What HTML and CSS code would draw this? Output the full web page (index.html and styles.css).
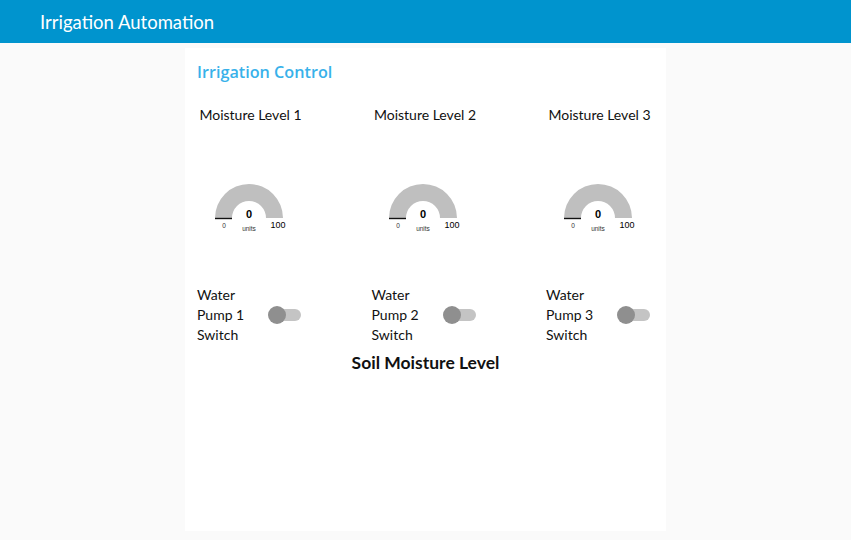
FILE: index.html
```html
<!DOCTYPE html>
<html>
<head>
<meta charset="utf-8">
<link rel="stylesheet" href="styles.css">
</head>
<body>
<header class="topbar">Irrigation Automation</header>
<main class="page">
  <section class="card">
    <h2 class="card-title">Irrigation Control</h2>
    <div class="grid">
      <div class="gauge">
        <div class="gauge-label">Moisture Level 1</div>
        <svg class="gauge-svg" viewBox="0 0 80 54" width="80" height="54">
          <path d="M6 37 A34 34 0 0 1 74 37 L57 37 A17 17 0 0 0 23 37 Z" fill="#bfbfbf"/>
          <line x1="6" y1="37.5" x2="23" y2="37.5" stroke="#111" stroke-width="1.4"/>
          <text x="40" y="37" class="g-val">0</text>
          <text x="15" y="47" class="g-min">0</text>
          <text x="40" y="49.5" class="g-unit">units</text>
          <text x="69" y="46.5" class="g-max">100</text>
        </svg>
      </div>
      <div class="gauge">
        <div class="gauge-label">Moisture Level 2</div>
        <svg class="gauge-svg" viewBox="0 0 80 54" width="80" height="54">
          <path d="M6 37 A34 34 0 0 1 74 37 L57 37 A17 17 0 0 0 23 37 Z" fill="#bfbfbf"/>
          <line x1="6" y1="37.5" x2="23" y2="37.5" stroke="#111" stroke-width="1.4"/>
          <text x="40" y="37" class="g-val">0</text>
          <text x="15" y="47" class="g-min">0</text>
          <text x="40" y="49.5" class="g-unit">units</text>
          <text x="69" y="46.5" class="g-max">100</text>
        </svg>
      </div>
      <div class="gauge">
        <div class="gauge-label">Moisture Level 3</div>
        <svg class="gauge-svg" viewBox="0 0 80 54" width="80" height="54">
          <path d="M6 37 A34 34 0 0 1 74 37 L57 37 A17 17 0 0 0 23 37 Z" fill="#bfbfbf"/>
          <line x1="6" y1="37.5" x2="23" y2="37.5" stroke="#111" stroke-width="1.4"/>
          <text x="40" y="37" class="g-val">0</text>
          <text x="15" y="47" class="g-min">0</text>
          <text x="40" y="49.5" class="g-unit">units</text>
          <text x="69" y="46.5" class="g-max">100</text>
        </svg>
      </div>

      <div class="switch-row">
        <div class="switch-text">Water Pump 1 Switch</div>
        <div class="toggle"><span class="track"></span><span class="thumb"></span></div>
      </div>
      <div class="switch-row">
        <div class="switch-text">Water Pump 2 Switch</div>
        <div class="toggle"><span class="track"></span><span class="thumb"></span></div>
      </div>
      <div class="switch-row">
        <div class="switch-text">Water Pump 3 Switch</div>
        <div class="toggle"><span class="track"></span><span class="thumb"></span></div>
      </div>
    </div>
    <div class="section-title">Soil Moisture Level</div>
  </section>
</main>
</body>
</html>
```

FILE: styles.css
```css
html, body {
  margin: 0;
  padding: 0;
}
body {
  background: #fafafa;
  font-family: Lato, "Open Sans", sans-serif;
  color: #111;
  width: 851px;
  height: 540px;
  overflow: hidden;
}
.topbar {
  height: 43px;
  line-height: 45px;
  background: #0094ce;
  color: #fff;
  font-size: 18.5px;
  padding-left: 40px;
  box-sizing: border-box;
}
.page {
  padding-top: 5px;
}
.card {
  width: 481px;
  height: 483px;
  margin-left: 185px;
  background: #fff;
  box-sizing: border-box;
  padding: 12px 12px;
}
.card-title {
  margin: 0;
  font-family: "Open Sans", Lato, sans-serif;
  font-size: 16.2px;
  font-weight: 600;
  line-height: 24px;
  color: #38b1ea;
}
.grid {
  display: grid;
  grid-template-columns: 107px 107px 107px;
  column-gap: 67.5px;
}
.gauge {
  display: flex;
  flex-direction: column;
  align-items: center;
}
.gauge-label {
  margin-top: 21px;
  line-height: 20px;
  font-size: 14px;
  white-space: nowrap;
}
.gauge-svg {
  display: block;
  margin-top: 56px;
  margin-left: -4px;
}
.g-val {
  font-family: "Liberation Sans", Arial, sans-serif;
  font-weight: bold;
  font-size: 11px;
  text-anchor: middle;
  fill: #000;
}
.g-min, .g-unit {
  font-family: "Liberation Sans", Arial, sans-serif;
  font-size: 6.5px;
  text-anchor: middle;
  fill: #333;
}
.g-max {
  font-family: "Liberation Sans", Arial, sans-serif;
  font-size: 9px;
  text-anchor: middle;
  fill: #000;
}
.switch-row {
  margin-top: 50px;
  display: flex;
  align-items: center;
}
.switch-text {
  width: 70px;
  font-size: 14px;
  line-height: 20px;
}
.toggle {
  position: relative;
  width: 33px;
  height: 18px;
  margin-left: 1px;
}
.track {
  position: absolute;
  left: 2px;
  top: 3px;
  width: 31px;
  height: 12px;
  border-radius: 6px;
  background: #c4c4c4;
}
.thumb {
  position: absolute;
  left: 0;
  top: 0;
  width: 18px;
  height: 18px;
  border-radius: 50%;
  background: #8f8f8f;
}
.section-title {
  margin-top: 6px;
  text-align: center;
  font-size: 17.5px;
  font-weight: bold;
  line-height: 24px;
}
```
